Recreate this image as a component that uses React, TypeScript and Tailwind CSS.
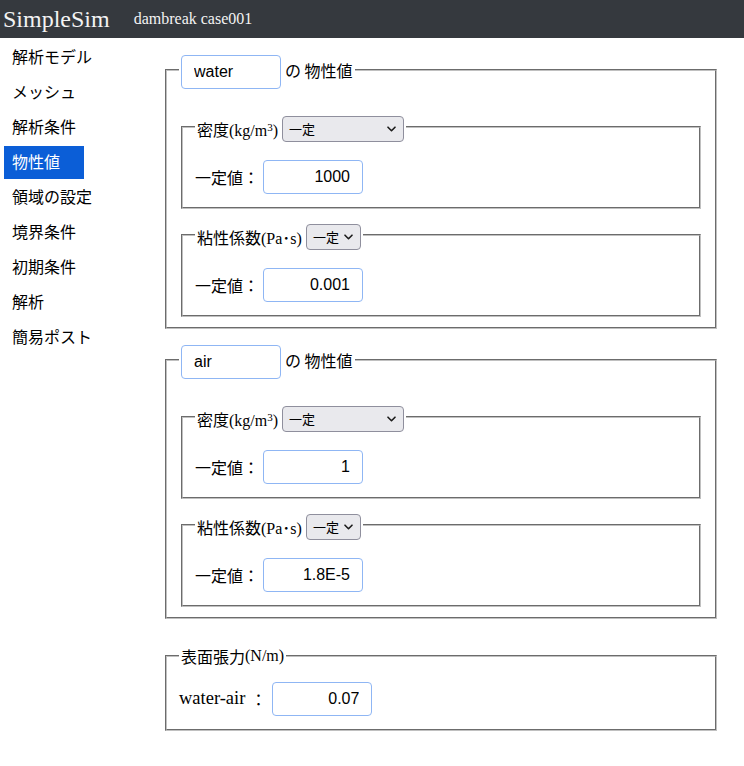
import React from 'react';

const menuItems = ['解析モデル', 'メッシュ', '解析条件', '物性値', '領域の設定', '境界条件', '初期条件', '解析', '簡易ポスト'];

const fieldsetCls = "mx-[2px] min-w-0 [border:2px_groove_#c0c0c0] px-3";

function SelectBox({ className }: { className: string }) {
  return (
    <div
      className={`flex h-[26px] items-center justify-between rounded-[4px] border border-[#8f8f9d] bg-[#e9e9ed] pl-[6px] pr-[7px] font-['Noto_Sans_CJK_JP',sans-serif] text-[13px] text-black ${className}`}
    >
      <span>一定</span>
      <svg width="9" height="6" viewBox="0 0 9 6" fill="none">
        <path d="M1 1.2l3.5 3.5L8 1.2" stroke="#1b1b1b" strokeWidth="1.6" strokeLinecap="round" strokeLinejoin="round" />
      </svg>
    </div>
  );
}

function ValueInput({ value, align = 'right' }: { value: string; align?: 'left' | 'right' }) {
  return (
    <input
      readOnly
      value={value}
      className={`h-[34px] w-[100px] shrink-0 rounded-[4px] border border-[#8fb6f4] bg-white px-3 font-['Liberation_Sans',Arial,sans-serif] text-[16px] text-black outline-none ${
        align === 'right' ? 'text-right' : 'text-left'
      }`}
    />
  );
}

function PropRow({ value }: { value: string }) {
  return (
    <div className="mt-4 flex h-[33px] items-center">
      <span className="mr-1 font-['Noto_Sans_CJK_JP',sans-serif] text-[16px]">一定値：</span>
      <ValueInput value={value} />
    </div>
  );
}

function MaterialBlock({ name, density, viscosity }: { name: string; density: string; viscosity: string }) {
  return (
    <fieldset className={`${fieldsetCls} pt-[6px] pb-[10px]`}>
      <legend className="flex h-[30px] items-start px-[2px]">
        <ValueInput value={name} align="left" />
        <span className="ml-1 mt-[3px] font-['Noto_Sans_CJK_JP',sans-serif] text-[16px]">の 物性値</span>
      </legend>

      {/* density */}
      <fieldset className={`${fieldsetCls} mt-[25px] pt-[6px] pb-[14px]`}>
        <legend className="flex h-[22px] items-start px-[2px]">
          <span className="mt-[1px] text-[16px]">
            <span className="font-['Noto_Sans_CJK_JP',sans-serif]">密度</span>(kg/m<sup className="text-[11px]">3</sup>)
          </span>
          <SelectBox className="ml-1 w-[122px]" />
        </legend>
        <PropRow value={density} />
      </fieldset>

      {/* viscosity */}
      <fieldset className={`${fieldsetCls} mt-[15px] pt-[6px] pb-[14px]`}>
        <legend className="flex h-[22px] items-start px-[2px]">
          <span className="mt-[1px] text-[16px]">
            <span className="font-['Noto_Sans_CJK_JP',sans-serif]">粘性係数</span>(Pa･s)
          </span>
          <SelectBox className="ml-1 w-[55px]" />
        </legend>
        <PropRow value={viscosity} />
      </fieldset>
    </fieldset>
  );
}

export default function App() {
  return (
    <div className="min-h-[766px] w-[744px] bg-white font-['Liberation_Serif','Noto_Sans_CJK_JP',serif] text-black">
      <header className="flex h-[38px] items-center bg-[#35393e] pl-[3px] text-[#f3f3f3]">
        <span className="text-[24px] leading-none">SimpleSim</span>
        <span className="ml-6 text-[16px] leading-none">dambreak case001</span>
      </header>

      <div className="flex">
        <nav className="w-[163px] shrink-0 pt-px font-['Noto_Sans_CJK_JP',sans-serif] text-[16px]">
          {menuItems.map((item) => (
            <div
              key={item}
              className={`ml-1 mt-[2px] flex h-[33px] w-20 items-center whitespace-nowrap pb-[3px] pl-2 ${
                item === '物性値' ? 'bg-[#0b5ed7] text-white' : 'text-black'
              }`}
            >
              {item}
            </div>
          ))}
        </nav>

        <main className="w-[556px] pt-[17px]">
          <MaterialBlock name="water" density="1000" viscosity="0.001" />
          <div className="mt-4">
            <MaterialBlock name="air" density="1" viscosity="1.8E-5" />
          </div>

          <fieldset className={`${fieldsetCls} mt-[27px] pt-[6px] pb-[14px]`}>
            <legend className="flex h-[20px] items-center px-[2px] text-[16px]">
              <span className="font-['Noto_Sans_CJK_JP',sans-serif]">表面張力</span>(N/m)
            </legend>
            <div className="mt-[10px] flex h-[33px] items-center">
              <span className="text-[18.5px]">water-air</span>
              <span className="ml-[5px] mr-[6px] font-['Noto_Sans_CJK_JP',sans-serif] text-[16px]">：</span>
              <ValueInput value="0.07" />
            </div>
          </fieldset>
        </main>
      </div>
    </div>
  );
}
